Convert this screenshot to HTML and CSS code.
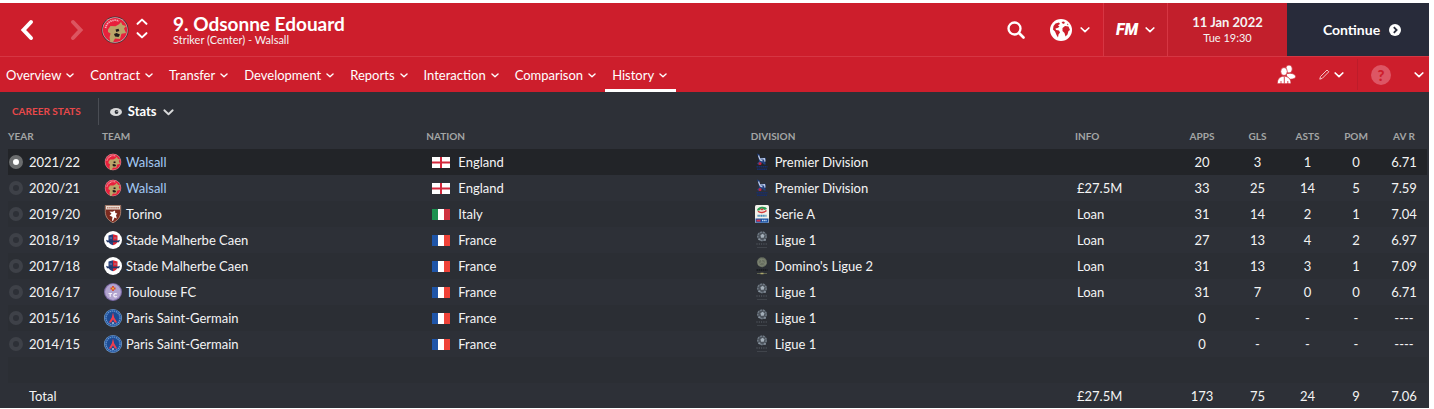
FILE: index.html
```html
<!DOCTYPE html>
<html lang="en">
<head>
<meta charset="UTF-8">
<meta name="viewport" content="width=device-width, initial-scale=1.0">
<title>Odsonne Edouard - History</title>
<link rel="stylesheet" href="styles.css">
</head>
<body>
<svg class="sprite" aria-hidden="true">
  <symbol id="chev" viewBox="0 0 10 6"><path d="M1.2 1l3.8 3.6L8.8 1" fill="none" stroke="currentColor" stroke-width="1.7" stroke-linecap="round" stroke-linejoin="round"/></symbol>
  <symbol id="back" viewBox="0 0 14 22"><path d="M11 3L3.500 11l7.500 8" fill="none" stroke="currentColor" stroke-width="4" stroke-linecap="round"/></symbol>
  <symbol id="walsall" viewBox="0 0 28 28">
    <circle cx="14" cy="14" r="13.500" fill="#3b3034"/>
    <circle cx="14" cy="14" r="12.700" fill="#d8a9ae"/>
    <circle cx="14" cy="14" r="12.100" fill="#e8203c"/>
    <path d="M4.500 12A9.800 9.800 0 0 1 18 5" fill="none" stroke="#f3b4bc" stroke-width="1.800" stroke-dasharray="1.300 .8"/>
    <path d="M7 13.500L9.500 10l5 .3 3.500-2L20 6l1.500 3 3.500 1-2 2.500 2 4.500-4.500.8-1.500 5.200-5-.5-2 3.500-2.500.5-1-5 1-4-2.500-1.500z" fill="#bba569"/>
    <path d="M14.500 13.500l3-.8.8 2.300-3 1zM13 18l2.500-1 3.500 1.500-1.500 2.500-3.500-.5z" fill="#211a1a"/>
  </symbol>
  <symbol id="torino" viewBox="0 0 18 18">
    <path d="M1.300.5h15.400v6.200c0 5.500-3.200 8.800-7.700 11-4.500-2.200-7.700-5.500-7.700-11z" fill="#7b2a1f" stroke="#c9a08a" stroke-width=".7"/>
    <path d="M2 1h14v3.500H2z" fill="#e8dcd2"/>
    <path d="M3 2.700h12" stroke="#b87f70" stroke-width="1.400" stroke-dasharray="1.500 .6"/>
    <path d="M5.500 6.500l3 .3L11 5.500l.3 2.500 2 .5-1.300 1.700.8 3.300-2.300-1-1.500 3.500-1-.4.500-3.600L5.500 10.500l2-1.700z" fill="#fff"/>
  </symbol>
  <symbol id="caen" viewBox="0 0 18 18">
    <circle cx="9" cy="9" r="9" fill="#fff"/>
    <path d="M4.500 4.500L9 3.300v11c-3-1.100-4.500-2.300-4.500-4.800z" fill="#27407c"/>
    <path d="M9 3.300l4.500 1.200v5c0 2.500-1.500 3.700-4.500 4.800z" fill="#d92434"/>
    <path d="M2 8.800l2 .8h10l2-.8-1 2.500H3z" fill="#223768"/>
    <path d="M5.500 7h2.500M10 7h2.500" stroke="#8792b5" stroke-width=".9"/>
  </symbol>
  <symbol id="toulouse" viewBox="0 0 18 18">
    <circle cx="9" cy="9" r="9" fill="#7d6ba6"/>
    <circle cx="9" cy="9" r="7.900" fill="#b2a4cf"/>
    <path d="M9 3v5M6.500 5.500h5" stroke="#d8462e" stroke-width="1.800"/>
    <circle cx="9" cy="5.500" r=".9" fill="#f0c23b"/>
    <path d="M4.500 10.500H8M6.200 10.500v3.300M13 11c-2-1-3.200.2-3.200 1.300s1.200 2.200 3.200 1.200" fill="none" stroke="#f4f0fa" stroke-width="1.200"/>
  </symbol>
  <symbol id="psg" viewBox="0 0 18 18">
    <circle cx="9" cy="9" r="9" fill="#7fa3cb"/>
    <circle cx="9" cy="9" r="8.400" fill="#2257a3"/>
    <circle cx="9" cy="9" r="7" fill="none" stroke="#7099cc" stroke-width="1.200" stroke-dasharray="1.200 .9"/>
    <circle cx="9" cy="9" r="6" fill="#1d4a92"/>
    <path d="M9 3.500L7.800 8.500 4.800 13.500h2.400L9 10.500l1.800 3h2.400l-3-5z" fill="#f03e4e"/>
    <path d="M8 14h2" stroke="#fff" stroke-width="1"/>
  </symbol>
  <symbol id="england" viewBox="0 0 18 11"><path d="M0 0h18v11H0z" fill="#fff"/><path d="M9 0v11M0 5.500h18" stroke="#d3283c" stroke-width="2"/></symbol>
  <symbol id="italy" viewBox="0 0 18 11"><path d="M0 0h18v11H0z" fill="#fff"/><path d="M0 0h6v11H0z" fill="#1c9150"/><path d="M12 0h6v11h-6z" fill="#cf3240"/></symbol>
  <symbol id="france" viewBox="0 0 18 11"><path d="M0 0h18v11H0z" fill="#fff"/><path d="M0 0h6v11H0z" fill="#1f55a8"/><path d="M12 0h6v11h-6z" fill="#ef4238"/></symbol>
  <symbol id="premier" viewBox="0 0 14 18">
    <path d="M2 .5l2.500 1 .5 3.500 5.500-.3.500 2.300-1 1 .8 3.500H9L7 9.500 3.500 12l-1.500-1.500 2-2-.5-4z" fill="#22407f"/>
    <path d="M3.500 2.500l1.300 3.500 4.700-.3.500 3M5 7l2.500 1" fill="none" stroke="#c3cfe8" stroke-width="1.200"/>
    <circle cx="5" cy="10.500" r="1.500" fill="#c02440"/>
    <path d="M1.500 13.800h11M2 16.300h10" stroke="#172e6b" stroke-width="1.600" stroke-dasharray="1.700 .4"/>
  </symbol>
  <symbol id="seriea" viewBox="0 0 14 18">
    <rect width="14" height="18" rx="1.500" fill="#f2f1ea"/>
    <path d="M2 5.500C2 1 11 .5 12 4L9.500 5C8 3 5 3.500 4.500 5.500z" fill="#2d9a52"/>
    <path d="M3 6.300c2 1.700 6 1.500 8.500-.8M5.500 4.500h3" fill="none" stroke="#d43a3c" stroke-width="1.500"/>
    <path d="M2.500 10.800h9" stroke="#3d87b5" stroke-width="1.900" stroke-dasharray="1.300 .4"/>
    <path d="M.5 13.500h13v3.300a1 1 0 0 1-1 1h-11a1 1 0 0 1-1-1z" fill="#1650a4"/>
    <path d="M1.500 15.600h4" stroke="#d8344a" stroke-width="2"/><path d="M7 15.600h5" stroke="#c4d6ee" stroke-width="1.500" stroke-dasharray="1.200 .5"/>
  </symbol>
  <symbol id="ligue" viewBox="0 0 14 18">
    <circle cx="7" cy="5.300" r="4.900" fill="#4b525b"/>
    <circle cx="7" cy="5.300" r="4.200" fill="none" stroke="#717b86" stroke-width="1.400" stroke-dasharray="1.800 1.100"/>
    <path d="M5.500 4.300l2-1.500 2 1.500-.8 2.500H6z" fill="#a4afb9"/>
    <path d="M6 9.800L3 8.200l2-1zM8 9.500l3 .3-.5-2z" fill="#8d98a3"/>
    <path d="M1.500 13h11" stroke="#50555d" stroke-width="1.500" stroke-dasharray="1 1.300"/>
    <path d="M2 16.500h10" stroke="#454a51" stroke-width=".8"/>
  </symbol>
  <symbol id="ligue2" viewBox="0 0 14 18">
    <circle cx="7" cy="5.300" r="5" fill="#686f60"/>
    <path d="M3 4l3-2 4 1 1 4-4 2-3-1zM6 2l1 3 4 2M7 5L3 8" fill="none" stroke="#848b78" stroke-width=".7"/>
    <path d="M1.500 13h11" stroke="#17191c" stroke-width="1.500" stroke-dasharray="1.500 .5"/>
    <path d="M2 16.500h10" stroke="#5f6450" stroke-width="1"/><path d="M5.500 16.500h3" stroke="#aaa66a" stroke-width="1.500"/>
  </symbol>
</svg>

<div class="app">
  <header class="topbar">
    <button class="arrow" aria-label="Back"><svg width="14" height="22"><use href="#back"/></svg></button>
    <button class="arrow forward" aria-label="Forward"><svg width="14" height="22"><use href="#back"/></svg></button>
    <svg class="club" width="28" height="28"><use href="#walsall"/></svg>
    <div class="stepper">
      <button aria-label="Previous player"><svg class="flip" width="12" height="7"><use href="#chev"/></svg></button>
      <button aria-label="Next player"><svg width="12" height="7"><use href="#chev"/></svg></button>
    </div>
    <div class="player">
      <h1>9. Odsonne Edouard</h1>
      <p>Striker (Center) - Walsall</p>
    </div>
    <button class="search" aria-label="Search">
      <svg width="18" height="18" viewBox="0 0 18 18"><circle cx="7.500" cy="7.500" r="6" fill="none" stroke="#fff" stroke-width="2.300"/><path d="M12 12l4.500 4.500" stroke="#fff" stroke-width="2.600" stroke-linecap="round"/></svg>
    </button>
    <button class="world" aria-label="World">
      <svg width="22" height="22" viewBox="0 0 22 22"><circle cx="11" cy="11" r="11" fill="#fff"/><path d="M3.500 7L5.500 4.500 9 3.500l1 1.500-2 1.200 1.500 1.500L7.500 9l-2 .5.500 1.500 3 .5 1 2-1.500 2-.5 3-1.500-2.500L5 12.500l-2-2zM11.500 3l2.500-.5 1 1.500-2 1zM12.500 9l2.500-2 3.500.5 1.500 3.500-1.500 1-1 3.500-2 2-1-3.500-2-2zM17 4.500l1.500 1-1 .8z" fill="#cd1e2c"/></svg>
      <svg width="10" height="6"><use href="#chev"/></svg>
    </button>
    <button class="fm"><span>FM</span><svg width="10" height="6"><use href="#chev"/></svg></button>
    <div class="date"><strong>11 Jan 2022</strong><span>Tue 19:30</span></div>
    <button class="continue">Continue
      <svg width="12" height="12" viewBox="0 0 12 12"><circle cx="6" cy="6" r="6" fill="#fff"/><path d="M4.800 3.200L7.600 6 4.800 8.800" fill="none" stroke="#282b3a" stroke-width="1.800"/></svg>
    </button>
  </header>

  <nav class="tabs">
    <button>Overview<svg width="8" height="5"><use href="#chev"/></svg></button>
    <button>Contract<svg width="8" height="5"><use href="#chev"/></svg></button>
    <button>Transfer<svg width="8" height="5"><use href="#chev"/></svg></button>
    <button>Development<svg width="8" height="5"><use href="#chev"/></svg></button>
    <button>Reports<svg width="8" height="5"><use href="#chev"/></svg></button>
    <button>Interaction<svg width="8" height="5"><use href="#chev"/></svg></button>
    <button>Comparison<svg width="8" height="5"><use href="#chev"/></svg></button>
    <button class="active">History<svg width="8" height="5"><use href="#chev"/></svg></button>
    <div class="tools">
      <button aria-label="Compare players">
        <svg width="19" height="19" viewBox="0 0 19 19"><g fill="#fff" stroke="#cd1e2c" stroke-width=".7"><ellipse cx="12" cy="4" rx="3.300" ry="4"/><path d="M9 9c4-1.500 9.500-.5 9.800 3-1 1.800-4 2.800-8 2z"/><ellipse cx="7" cy="6.500" rx="3.300" ry="4"/><path d="M.3 18.700C.3 13.500 3 11.300 7 11.300s7 2.200 7 7.400z"/></g><path d="M7.300 12v6.500M4 16v3M10.800 16v3" stroke="#cd1e2c" stroke-width=".8"/></svg>
      </button>
      <button class="edit" aria-label="Edit">
        <svg width="11" height="11" viewBox="0 0 11 11"><path d="M.8 10.200L1.500 7.500 8 1l1.800 1.800-6.500 6.500z" fill="none" stroke="#f3c4c8" stroke-width="1"/></svg>
        <svg width="10" height="6"><use href="#chev"/></svg>
      </button>
      <button class="help" aria-label="Help"><span>?</span></button>
      <button class="more" aria-label="More"><svg width="10" height="6"><use href="#chev"/></svg></button>
    </div>
  </nav>

  <main>
    <div class="subbar">
      <h2>Career Stats</h2>
      <button class="view">
        <svg width="12" height="8" viewBox="0 0 12 8"><ellipse cx="6" cy="4" rx="6" ry="4" fill="#d8d9da"/><circle cx="6.500" cy="4" r="1.900" fill="#2d3037"/><circle cx="7" cy="3.500" r=".6" fill="#d8d9da"/></svg>
        Stats
        <svg width="11" height="7"><use href="#chev"/></svg>
      </button>
    </div>

    <table class="stats">
      <thead>
        <tr><th class="year">Year</th><th>Team</th><th>Nation</th><th>Division</th><th class="info">Info</th><th class="apps">Apps</th><th class="gls">Gls</th><th class="asts">Asts</th><th class="pom">Pom</th><th class="avr">Av R</th></tr>
      </thead>
      <tbody>
        <tr class="selected">
          <td><label><input type="radio" name="season" checked>2021/22</label></td>
          <td><svg class="crest"><use href="#walsall"/></svg><a href="#">Walsall</a></td>
          <td><svg class="flag"><use href="#england"/></svg>England</td>
          <td><svg class="league"><use href="#premier"/></svg>Premier Division</td>
          <td></td><td>20</td><td>3</td><td>1</td><td>0</td><td>6.71</td>
        </tr>
        <tr>
          <td><label><input type="radio" name="season">2020/21</label></td>
          <td><svg class="crest"><use href="#walsall"/></svg><a href="#">Walsall</a></td>
          <td><svg class="flag"><use href="#england"/></svg>England</td>
          <td><svg class="league"><use href="#premier"/></svg>Premier Division</td>
          <td>£27.5M</td><td>33</td><td>25</td><td>14</td><td>5</td><td>7.59</td>
        </tr>
        <tr>
          <td><label><input type="radio" name="season">2019/20</label></td>
          <td><svg class="crest"><use href="#torino"/></svg>Torino</td>
          <td><svg class="flag"><use href="#italy"/></svg>Italy</td>
          <td><svg class="league"><use href="#seriea"/></svg>Serie A</td>
          <td>Loan</td><td>31</td><td>14</td><td>2</td><td>1</td><td>7.04</td>
        </tr>
        <tr>
          <td><label><input type="radio" name="season">2018/19</label></td>
          <td><svg class="crest"><use href="#caen"/></svg>Stade Malherbe Caen</td>
          <td><svg class="flag"><use href="#france"/></svg>France</td>
          <td><svg class="league"><use href="#ligue"/></svg>Ligue 1</td>
          <td>Loan</td><td>27</td><td>13</td><td>4</td><td>2</td><td>6.97</td>
        </tr>
        <tr>
          <td><label><input type="radio" name="season">2017/18</label></td>
          <td><svg class="crest"><use href="#caen"/></svg>Stade Malherbe Caen</td>
          <td><svg class="flag"><use href="#france"/></svg>France</td>
          <td><svg class="league"><use href="#ligue2"/></svg>Domino's Ligue 2</td>
          <td>Loan</td><td>31</td><td>13</td><td>3</td><td>1</td><td>7.09</td>
        </tr>
        <tr>
          <td><label><input type="radio" name="season">2016/17</label></td>
          <td><svg class="crest"><use href="#toulouse"/></svg>Toulouse FC</td>
          <td><svg class="flag"><use href="#france"/></svg>France</td>
          <td><svg class="league"><use href="#ligue"/></svg>Ligue 1</td>
          <td>Loan</td><td>31</td><td>7</td><td>0</td><td>0</td><td>6.71</td>
        </tr>
        <tr>
          <td><label><input type="radio" name="season">2015/16</label></td>
          <td><svg class="crest"><use href="#psg"/></svg>Paris Saint-Germain</td>
          <td><svg class="flag"><use href="#france"/></svg>France</td>
          <td><svg class="league"><use href="#ligue"/></svg>Ligue 1</td>
          <td></td><td>0</td><td>-</td><td>-</td><td>-</td><td>----</td>
        </tr>
        <tr>
          <td><label><input type="radio" name="season">2014/15</label></td>
          <td><svg class="crest"><use href="#psg"/></svg>Paris Saint-Germain</td>
          <td><svg class="flag"><use href="#france"/></svg>France</td>
          <td><svg class="league"><use href="#ligue"/></svg>Ligue 1</td>
          <td></td><td>0</td><td>-</td><td>-</td><td>-</td><td>----</td>
        </tr>
        <tr class="spacer"><td colspan="10"></td></tr>
      </tbody>
      <tfoot>
        <tr><td class="total">Total</td><td></td><td></td><td></td><td>£27.5M</td><td>173</td><td>75</td><td>24</td><td>9</td><td>7.06</td></tr>
      </tfoot>
    </table>
  </main>
</div>
</body>
</html>
```
FILE: styles.css
```css
* {
  box-sizing: border-box;
}

body {
  margin: 0;
  padding: 3px 5px 0 0;
  background-color: #fff;
  color: #f4f4f4;
  font-family: Lato, "Open Sans", sans-serif;
  font-size: 13px;
  line-height: 16px;
}

.sprite {
  position: absolute;
  width: 0;
  height: 0;
}

svg {
  flex: none;
}

button {
  display: flex;
  align-items: center;
  justify-content: center;
  padding: 0;
  border: none;
  background: none;
  color: #fff;
  font: inherit;
  cursor: pointer;
}

h1, h2, p {
  margin: 0;
}

.app {
  background-color: #2d3037;
}

/* top bar */
.topbar {
  display: flex;
  align-items: center;
  height: 54px;
  background-color: #cd1e2c;
  border-bottom: 1px solid #d63643;
}

.arrow {
  width: 54px;
  height: 54px;
}

.forward {
  width: 46px;
  color: #dc5560;
}

.forward svg {
  transform: scaleX(-1);
}

.club {
  margin-left: 1px;
}

.stepper {
  display: flex;
  flex-direction: column;
  gap: 7px;
  margin-left: 7px;
  padding-bottom: 2px;
}

.flip {
  transform: scaleY(-1);
}

.player {
  flex: 1;
  margin-left: 25px;
}

.player h1 {
  color: #fff;
  font-size: 19px;
  line-height: 20px;
  font-weight: 700;
}

.player p {
  font-size: 11px;
  line-height: 12px;
}

.world {
  gap: 8px;
  margin: 0 13px 0 25px;
}

.fm {
  gap: 7px;
  width: 64px;
  height: 53px;
  background-color: #c21f2c;
  border-left: 1px solid #d63643;
}

.fm span {
  font-family: Roboto, sans-serif;
  font-size: 16px;
  font-style: italic;
  font-weight: 900;
}

.date {
  display: flex;
  flex-direction: column;
  align-items: center;
  justify-content: center;
  width: 120px;
  height: 53px;
  background-color: #c21f2c;
  border-left: 1px solid #d63643;
}

.date span {
  font-size: 11px;
}

.continue {
  gap: 9px;
  width: 142px;
  height: 53px;
  padding-left: 8px;
  background-color: #282b3a;
  font-size: 14px;
  font-weight: 700;
}

/* tabs */
.tabs {
  display: flex;
  height: 35px;
  background-color: #cd1e2c;
}

.tabs > button {
  gap: 5px;
  padding: 3px 9px 0 7px;
  border-bottom: 3px solid transparent;
}

.tabs > button:first-child {
  padding-left: 6px;
}

.tabs > button svg {
  margin-top: 2px;
}

.tabs > .active {
  border-bottom-color: #fff;
}

.tools {
  display: flex;
  align-items: center;
  margin-left: auto;
  padding-right: 5px;
}

.edit {
  gap: 4px;
  margin-left: 23px;
  padding-right: 13px;
}

.help {
  height: 31px;
  padding: 0 23px 0 13px;
  border-left: 1px solid #bd1c2a;
}

.help span {
  width: 20px;
  height: 20px;
  border-radius: 50%;
  background-color: #dd5664;
  color: #cd1e2c;
  font-size: 15px;
  font-weight: 900;
  line-height: 20px;
}

/* career stats */
main {
  padding: 0 2px 0 8px;
}

.subbar {
  display: flex;
  align-items: center;
  height: 33px;
  padding: 5px 0 0 4px;
}

.subbar h2 {
  padding-right: 17px;
  color: #e8484a;
  border-right: 1px solid #4a4d54;
  font-size: 10px;
  line-height: 27px;
  font-weight: 700;
  text-transform: uppercase;
}

.view {
  gap: 6px;
  margin-left: 11px;
  font-weight: 700;
}

.view svg {
  margin-top: 2px;
  color: #d8d9da;
}

.stats {
  width: 100%;
  table-layout: fixed;
  border-collapse: collapse;
}

.stats th {
  height: 24px;
  padding: 0 0 2px;
  color: #a3a5a5;
  font-size: 10px;
  font-weight: 700;
  text-align: left;
  text-transform: uppercase;
}

.stats td {
  height: 26px;
  padding: 0;
  white-space: nowrap;
}

.stats th:nth-child(n+6), .stats td:nth-child(n+6) {
  text-align: center;
}

.stats td:nth-child(2), .stats td:nth-child(3), .stats td:nth-child(5) {
  padding-left: 2px;
}

.stats tbody tr:nth-child(odd) {
  background-color: #2b2e34;
}

.stats .selected.selected {
  background-color: #222428;
}

.stats tfoot td {
  height: 25px;
}

.stats .total {
  padding-left: 21px;
}

.year { width: 94px; }
.info { width: 98px; }
.apps { width: 58px; }
.gls { width: 53px; }
.asts { width: 47px; }
.pom { width: 50px; }
.avr { width: 46px; }

.stats a {
  color: #a3c9f5;
  text-decoration: none;
}

.stats label {
  display: flex;
  align-items: center;
}

.stats input {
  appearance: none;
  width: 14px;
  height: 14px;
  margin: 0 6px 0 1px;
  border: 4px solid #3e4148;
  border-radius: 50%;
  background-color: #2d3037;
}

.stats input:checked {
  border-color: #6b6d6e;
  background-color: #fff;
}

.crest {
  width: 18px;
  height: 18px;
  margin-right: 4px;
  vertical-align: -4px;
}

.flag {
  width: 18px;
  height: 11px;
  margin: 0 8px 0 4px;
  vertical-align: -1px;
}

.league {
  width: 14px;
  height: 18px;
  margin: 0 6px 0 4px;
  vertical-align: -4px;
}
```
